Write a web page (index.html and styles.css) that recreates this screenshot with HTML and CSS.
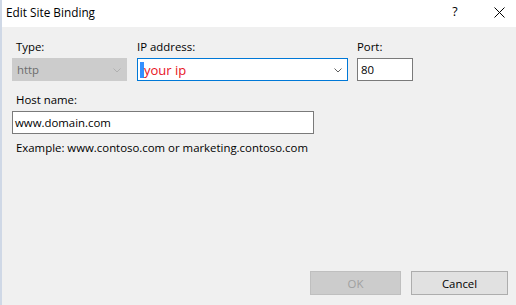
FILE: index.html
```html
<!DOCTYPE html>
<html>
<head>
<meta charset="utf-8">
<link rel="stylesheet" href="styles.css">
</head>
<body>
<div class="window">
  <div class="edge"></div>
  <div class="main">
    <div class="titlebar">
      <span class="title">Edit Site Binding</span>
      <span class="help">?</span>
      <span class="close"><svg width="11" height="11" viewBox="0 0 11 11"><path d="M0.5 0.5L10.5 10.5M10.5 0.5L0.5 10.5" stroke="#000" stroke-width="1"/></svg></span>
    </div>
    <div class="body">
      <div class="row1">
        <div class="field f-type">
          <label class="lbl">Type:</label>
          <div class="combo disabled"><span class="val">http</span><svg class="chev" width="8" height="5" viewBox="0 0 8 5"><path d="M0.5 0.5L4 4L7.5 0.5" fill="none" stroke="#b0b0b0"/></svg></div>
        </div>
        <div class="field f-ip">
          <label class="lbl tight">IP address:</label>
          <div class="combo focus"><span class="caret"></span><span class="val red">your ip</span><svg class="chev" width="8" height="5" viewBox="0 0 8 5"><path d="M0.5 0.5L4 4L7.5 0.5" fill="none" stroke="#606060"/></svg></div>
        </div>
        <div class="field f-port">
          <label class="lbl tight">Port:</label>
          <div class="input port">80</div>
        </div>
      </div>
      <div class="field f-host">
        <label class="lbl">Host name:</label>
        <div class="input host">www.domain.com</div>
      </div>
      <div class="example">Example: www.contoso.com or marketing.contoso.com</div>
      <div class="buttons">
        <div class="btn disabled">OK</div>
        <div class="btn">Cancel</div>
      </div>
    </div>
  </div>
</div>
</body>
</html>
```
FILE: styles.css
```css
* { box-sizing: border-box; }
html, body { margin: 0; padding: 0; }
body {
  width: 516px;
  height: 305px;
  overflow: hidden;
  font-family: "Open Sans", "Noto Sans", sans-serif;
  font-size: 11.4px;
  color: #000;
}
.window { display: flex; width: 516px; height: 305px; }
.edge { width: 2px; background: #cfd8e6; flex: none; }
.main { flex: 1; display: flex; flex-direction: column; background: #f0f0f0; }
.titlebar {
  height: 27px;
  background: #fff;
  display: flex;
  align-items: center;
  padding-left: 4px;
}
.title { flex: 1; font-size: 11.8px; position: relative; top: -2px; }
.help { width: 46px; text-align: center; font-size: 12.5px; position: relative; top: -2px; left: 8px; }
.close { width: 46px; display: flex; justify-content: center; position: relative; top: -1px; left: 6px; }
.body { flex: 1; display: flex; flex-direction: column; padding: 12px 0 0 10px; }
.row1 { display: flex; }
.lbl { display: block; height: 19px; padding-left: 4px; line-height: 16px; }
.lbl.tight { padding-left: 0; }
.f-type { width: 115px; margin-right: 10px; }
.f-ip { width: 211px; margin-right: 9px; }
.f-port { width: 56px; }
.combo, .input {
  height: 23px;
  border: 1px solid #7a7a7a;
  background: #fff;
  display: flex;
  align-items: center;
  padding-left: 4px;
  padding-right: 5px;
}
.combo .val { flex: 1; }
.combo .chev { margin-top: 1px; }
.combo.disabled { background: #cccccc; border-color: #cccccc; color: #6d6d6d; }
.combo.focus { border-color: #0078d7; padding-left: 2px; }
.red { color: #e81123; font-size: 13px; }
.caret { background: #3390ff; width: 4px; height: 16px; flex: none; }
.port { padding-left: 3px; }
.f-host { margin-top: 11px; width: 302px; }
.host { padding-left: 2px; }
.example { margin-top: 6px; padding-left: 4px; }
.buttons { margin-top: auto; margin-bottom: 10px; display: flex; justify-content: flex-end; gap: 10px; padding-right: 8px; }
.btn {
  width: 97px;
  height: 24px;
  border: 1px solid #adadad;
  background: #e1e1e1;
  display: flex;
  align-items: center;
  justify-content: center;
}
.btn.disabled { width: 91px; background: #cccccc; border-color: #bfbfbf; color: #a0a0a0; }
```
